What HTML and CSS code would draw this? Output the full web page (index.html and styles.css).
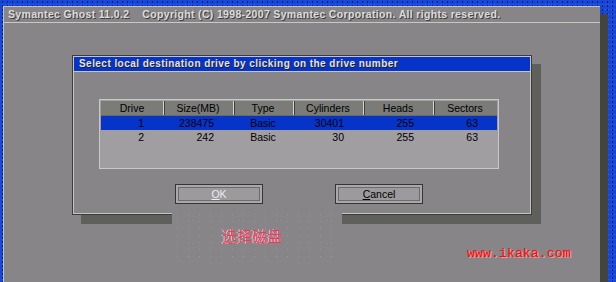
FILE: index.html
```html
<!DOCTYPE html>
<html>
<head>
<meta charset="utf-8">
<title>Symantec Ghost 11.0.2</title>
<link rel="stylesheet" href="styles.css">
</head>
<body>
<div class="screen">
  <div class="window">
    <div class="topbar">Symantec Ghost 11.0.2&nbsp;&nbsp;&nbsp; Copyright (C) 1998-2007 Symantec Corporation. All rights reserved.</div>

    <div class="desk">
      <div class="dialog">
        <div class="dlg-title">Select local destination drive by clicking on the drive number</div>
        <div class="dlg-body">
          <table class="drives">
            <colgroup>
              <col class="c-drive"><col class="c-size"><col class="c-type">
              <col class="c-cyl"><col class="c-heads"><col class="c-sect">
            </colgroup>
            <tr>
              <th>Drive</th><th>Size(MB)</th><th>Type</th>
              <th>Cylinders</th><th>Heads</th><th>Sectors</th>
            </tr>
            <tr class="sel">
              <td>1</td><td>238475</td><td class="mid">Basic</td>
              <td>30401</td><td>255</td><td>63</td>
            </tr>
            <tr>
              <td>2</td><td>242</td><td class="mid">Basic</td>
              <td>30</td><td>255</td><td>63</td>
            </tr>
            <tr class="filler"><td colspan="6"></td></tr>
          </table>

          <div class="buttons">
            <div class="btn focus"><u>O</u>K</div>
            <div class="btn"><u>C</u>ancel</div>
          </div>
        </div>
      </div>
    </div>

    <div class="caption">选择磁盘</div>
    <div class="site">www.ikaka.com</div>
  </div>
</div>
</body>
</html>
```

FILE: styles.css
```css
html, body {
  margin: 0;
  padding: 0;
}

body {
  background: #1444d4;
}

/* blue noisy desktop behind the Ghost window */
.screen {
  width: 616px;
  height: 282px;
  overflow: hidden;
  box-sizing: border-box;
  padding: 6px 0 0 3px;
  background-color: #1646d8;
  background-image:
    radial-gradient(circle, #08206a 0.7px, transparent 1.1px),
    radial-gradient(circle, #2a5cf0 0.7px, transparent 1.1px);
  background-size: 5px 4px, 3px 5px;
  background-position: 0 0, 1px 2px;
}

.window {
  position: relative;
  width: 596px;
  height: 290px;
  background: #878587;
  border-top: 1px solid #c4c4bc;
  border-left: 1px solid #c4c4bc;
  box-shadow: 8px 8px 0 #43443f;
}

.topbar {
  height: 15px;
  padding-left: 4px;
  border-bottom: 1px solid #c8c8c0;
  font-family: "Liberation Sans", Arial, sans-serif;
  font-size: 10.5px;
  font-weight: bold;
  line-height: 15px;
  letter-spacing: 0.33px;
  color: #dcdcd8;
  text-shadow: 1px 1px 0 #404040;
  white-space: nowrap;
}

.desk {
  padding: 32px 0 0 68px;
}

.dialog {
  width: 458px;
  height: 158px;
  border: 1px solid #3c3c3a;
  background: #878587;
  box-shadow: inset 0 0 0 1px #c4c4c0, 9px 9px 0 #5f605c;
}

.dlg-title {
  margin: 1px 1px 0 1px;
  height: 14px;
  padding-left: 5px;
  background: #0634c8;
  border-bottom: 1px solid #c4c4c0;
  font-family: "Liberation Sans", Arial, sans-serif;
  font-size: 10px;
  font-weight: bold;
  line-height: 14px;
  letter-spacing: 0.45px;
  color: #e4e4e4;
  text-shadow: 1px 1px 0 #202020;
  white-space: nowrap;
}

.dlg-body {
  padding: 27px 0 0 26px;
}

.drives {
  width: 400px;
  table-layout: fixed;
  border-collapse: separate;
  border-spacing: 0;
  border: 1px solid #c8c8c4;
  padding: 1px;
  background: #a09ea0;
  font-family: "Liberation Sans", Arial, sans-serif;
  font-size: 10.5px;
  color: #000;
}

.c-drive { width: 62px; }
.c-size { width: 70px; }
.c-type { width: 60px; }
.c-cyl { width: 70px; }
.c-heads { width: 70px; }
.c-sect { width: 64px; }

.drives th {
  height: 14px;
  padding: 0;
  background: #7b7c78;
  font-weight: normal;
  line-height: 14px;
  text-align: center;
  border-bottom: 1px solid #6a6a66;
}

.drives th + th {
  box-shadow: inset 1px 0 0 #d4d4d0, inset 2px 0 0 #3e3e3c;
}

.drives td {
  height: 14px;
  padding: 0 19px 0 0;
  text-align: right;
  line-height: 14px;
}

.drives td.mid {
  padding: 0;
  text-align: center;
}

.drives tr.sel td {
  background: #0634c8;
}

.drives tr.filler td {
  height: 23px;
}

.buttons {
  display: flex;
  gap: 72px;
  padding: 15px 0 0 76px;
}

.btn {
  width: 84px;
  height: 16px;
  border: 1px solid #353633;
  padding: 1px;
  background: #9c9a9c;
  box-shadow: inset 0 0 0 2px #a8a8a6, inset 0 0 0 3px #6c6c6a;
  font-family: "Liberation Sans", Arial, sans-serif;
  font-size: 10.5px;
  line-height: 16px;
  text-align: center;
  color: #000;
}

.btn.focus {
  color: #ececec;
}

/* pasted-in caption over the dialog's bottom edge */
.caption {
  position: absolute;
  left: 168px;
  top: 204px;
  width: 170px;
  height: 52px;
  box-sizing: border-box;
  padding: 16px 0 0 50px;
  background-color: #878587;
  background-image: radial-gradient(circle, #989698 0.5px, transparent 0.9px);
  background-size: 11px 7px;
  font-family: "Noto Sans CJK SC", sans-serif;
  font-size: 15px;
  line-height: 18px;
  color: #f03c5c;
  text-shadow: -1px 0 0 #e8dce4;
}

.site {
  position: absolute;
  left: 463px;
  top: 239px;
  font-family: "Liberation Mono", "Courier New", monospace;
  font-size: 13.3px;
  line-height: 16px;
  color: #ff0a0a;
  text-shadow: 1px 1px 0 #e8a0a0;
}
```
